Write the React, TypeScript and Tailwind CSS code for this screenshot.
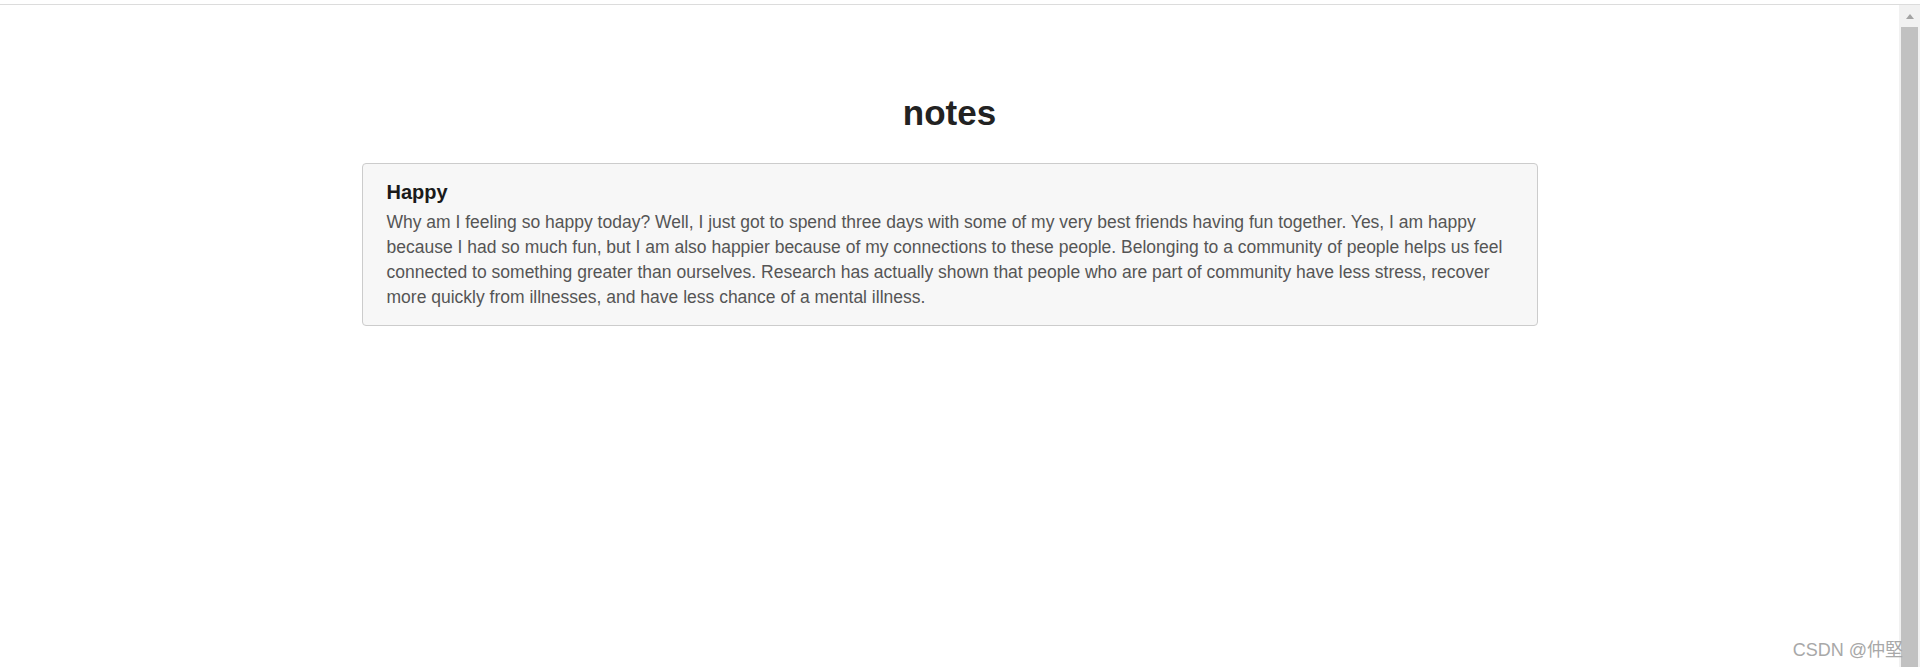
const NOTE_TEXT =
  "Why am I feeling so happy today? Well, I just got to spend three days with some of my very best friends having fun together. Yes, I am happy because I had so much fun, but I am also happier because of my connections to these people. Belonging to a community of people helps us feel connected to something greater than ourselves. Research has actually shown that people who are part of community have less stress, recover more quickly from illnesses, and have less chance of a mental illness.";

function FakeScrollbar() {
  return (
    <div className="flex w-[21px] shrink-0 flex-col bg-[#f1f1f1]">
      <div className="flex h-[22px] items-center justify-center">
        <div className="h-0 w-0 border-x-[4px] border-b-[5px] border-x-transparent border-b-[#a3a3a3]" />
      </div>
      <div className="ml-[2px] mr-[2px] flex-1 bg-[#c1c1c1]" />
    </div>
  );
}

export default function App() {
  return (
    <div className="relative flex h-[667px] w-full flex-col overflow-hidden bg-white font-['Liberation_Sans',Arial,sans-serif]">
      <div className="h-[4px] shrink-0 bg-white" />
      <div className="h-[1px] shrink-0 bg-[#dcdcdc]" />

      <div className="flex min-h-0 flex-1">
        <main className="flex-1 pt-[88px]">
          <h1 className="text-center text-[35px] font-bold leading-[40px] text-[#222]">notes</h1>

          <div className="mx-auto mt-[30px] w-[1176px] rounded-[4px] border border-[#cccccc] bg-[#f7f7f7] px-[24px] pb-[15px] pt-[14px]">
            <h4 className="text-[20px] font-bold leading-[28px] text-[#1a1a1a]">Happy</h4>
            <p className="mt-[4px] text-[17.5px] leading-[25px] text-[#555]">{NOTE_TEXT}</p>
          </div>
        </main>

        <FakeScrollbar />
      </div>

      <span className="absolute bottom-[8px] right-[17px] font-['Liberation_Sans','Noto_Sans_CJK_TC',sans-serif] text-[18px] leading-none text-[#a8a8a8]">
        CSDN @仲堅
      </span>
    </div>
  );
}
